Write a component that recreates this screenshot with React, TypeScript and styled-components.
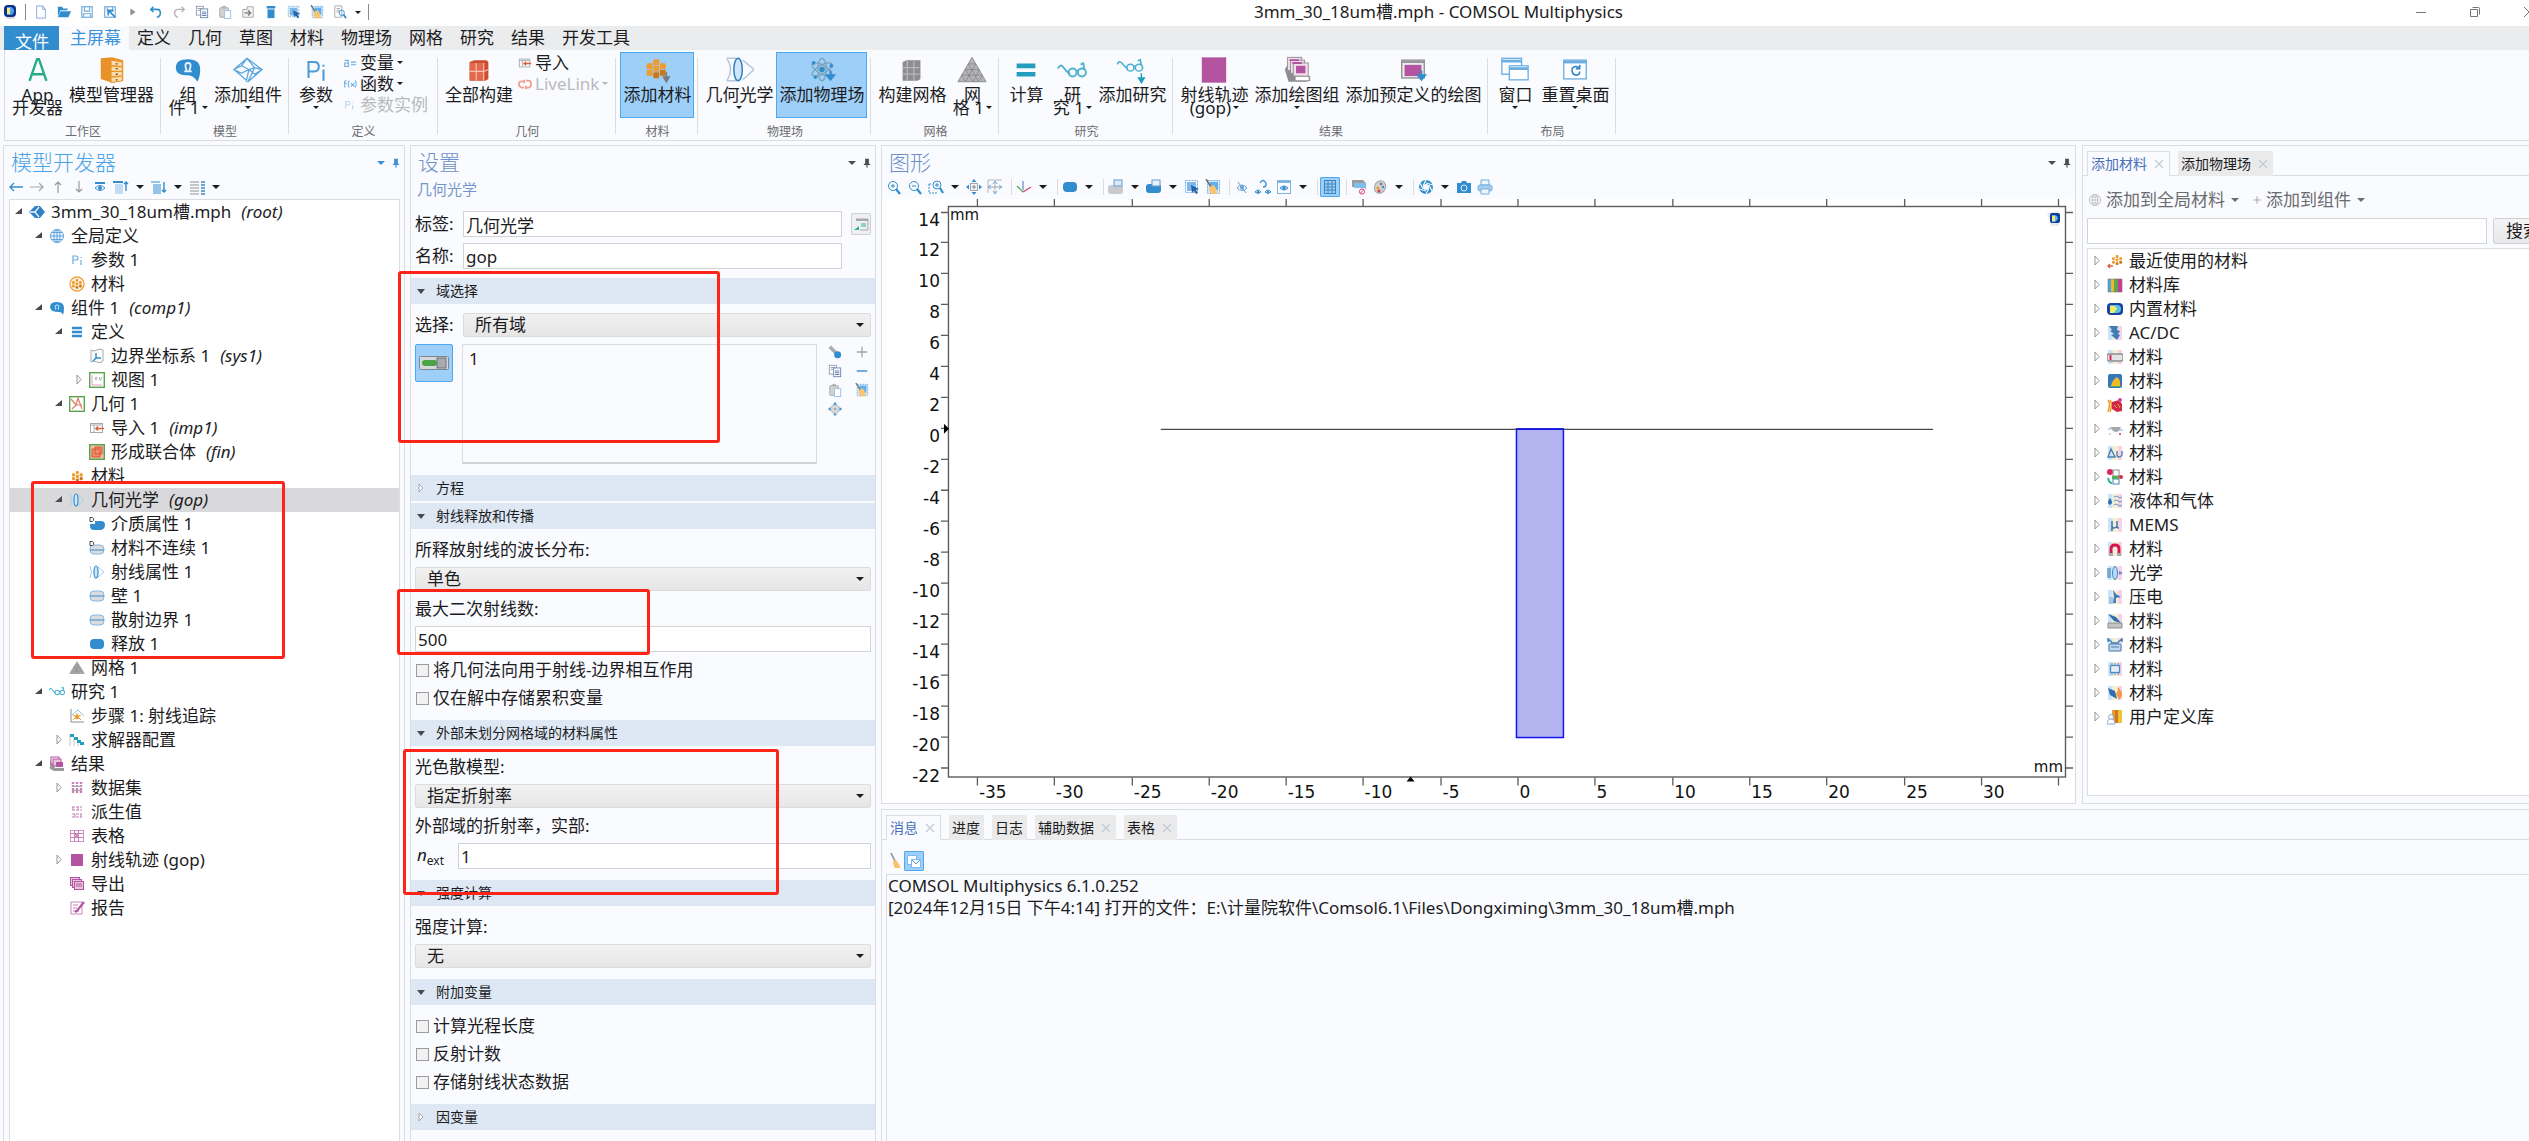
import React from "react";
import styled, { createGlobalStyle, css } from "styled-components";

const c = {
  bg: "#fafbff",
  line: "#dcdde2",
  blue: "#328dcf",
  light: "#bfdcf5",
  grey: "#8a8a8e",
  mauve: "#b4539f",
  teal: "#239fbd",
  orange: "#ef9b2d",
  red: "#dc5f42",
  ink: "#1c1c1e",
  select: "#9dcff8",
  selectLine: "#4aa9f2",
};

const GlobalStyle = createGlobalStyle`
  *, *::before, *::after { box-sizing: border-box; }
  body {
    margin: 0;
    background: ${c.bg};
    color: ${c.ink};
    font: 17px/24px "Noto Sans", "Noto Sans CJK SC", sans-serif;
    overflow: hidden;
  }
  button, input, select { font: inherit; color: inherit; }
`;

/* ---------- icons ---------- */

const cells = (x: number, y: number, s: number, fill: string) => (
  <g fill={fill}>
    <rect x={x + s} y={y} width={s - 0.7} height={s - 0.7} rx="1" />
    <rect x={x} y={y + s * 0.6} width={s - 0.7} height={s - 0.7} rx="1" />
    <rect x={x + 2 * s} y={y + s * 0.6} width={s - 0.7} height={s - 0.7} rx="1" />
    <rect x={x + s} y={y + s} width={s - 0.7} height={s - 0.7} rx="1" />
    <rect x={x} y={y + s * 1.6} width={s - 0.7} height={s - 0.7} rx="1" />
    <rect x={x + 2 * s} y={y + s * 1.6} width={s - 0.7} height={s - 0.7} rx="1" fill="#c9791a" />
    <rect x={x + s} y={y + s * 2} width={s - 0.7} height={s - 0.7} rx="1" fill="#c9791a" />
  </g>
);

const pastel = (
  <g>
    <rect x="1" y="1" width="4" height="14" fill="#cfe3f6" />
    <rect x="5" y="1" width="3" height="14" fill="#e8efdc" />
    <rect x="8" y="1" width="3" height="14" fill="#fdf0d0" />
    <rect x="11" y="1" width="4" height="14" fill="#f6d3ea" />
  </g>
);

const goggles = (
  <g fill="none" stroke="#4eb3cf" strokeWidth="1.4">
    <path d="M0 7q2-4 4-1t5 5" />
    <circle cx="11" cy="10" r="3" />
    <circle cx="18" cy="10" r="3" />
    <path d="M14 9q1-1 1 0M20 8l-1-5-2 1" />
  </g>
);

const smallIcons: Record<string, React.ReactNode> = {
  app: <g><path d="M2 11l3 4h7l2-4z" fill="#d9dadd" /><rect x="2" y="1" width="12" height="12" rx="4" fill="#10308c" /><path d="M5 3h4q3 1 3 4t-3 4H5z" fill="#4fa4e8" /><path d="M5 4h3v6H5z" fill="#f2ec7c" /></g>,
  file: <path d="M3 1h7l3 4v10H3zM10 1v4h3" fill="#fff" stroke="#7aa5d8" />,
  open: <g fill={c.blue}><path d="M1 2h5l1 2h5v2H4l-3 7z" /><path d="M4 7h12l-3 7H1z" /></g>,
  save: <g fill="none" stroke="#79aee0" strokeWidth="1.4"><rect x="2" y="2" width="12" height="12" /><path d="M5 2v5h6V2M4 14v-4h8v4" /></g>,
  saveAs: <g fill="none" stroke="#79aee0" strokeWidth="1.4"><rect x="2" y="2" width="12" height="12" /><path d="M5 2v5h6V2" /><path d="M7 7l7 7M6 12V6h6" stroke={c.blue} strokeWidth="2" /></g>,
  play: <path d="M5 4l6 4-6 4z" fill="#8d8f93" />,
  undo: <path d="M5 2L2 5l3 3M2 5h7q4 0 4 4t-4 5" fill="none" stroke={c.blue} strokeWidth="1.8" />,
  redo: <path d="M11 2l3 3-3 3M14 5H7Q3 5 3 9t4 5" fill="none" stroke="#b2b4b8" strokeWidth="1.6" />,
  copy: <g fill="#fff" stroke="#8c97aa"><rect x="1.5" y="1.5" width="8" height="10" /><path d="M3 4h5M3 6h3" /><rect x="6.5" y="4.5" width="8" height="10" stroke="#6681ae" /><path d="M8 8h5M8 10h5M8 12h5" stroke="#4a70b4" /></g>,
  paste: <g><rect x="2" y="3" width="10" height="11" rx="1" fill="#d2d2d2" stroke="#a5a5a5" /><rect x="5" y="1" width="4" height="3" fill="#b4b4b4" /><rect x="7.5" y="6.5" width="7" height="9" fill="#fff" stroke="#96bde6" /></g>,
  duplicate: <g fill="none" stroke="#a0a2a6"><path d="M7 2h7v12H2V5h5z" fill="#f2f2f2" /><path d="M4 9h7M8 6l3 3-3 3" strokeWidth="1.5" stroke="#77797d" /></g>,
  trash: <g fill={c.blue}><rect x="3" y="1" width="10" height="3" rx="1" /><path d="M4 5h8v10H4z" /></g>,
  pick: <g><rect x="1.5" y="1.5" width="12" height="12" fill="none" stroke="#77b0e4" strokeDasharray="2 1" /><rect x="3" y="3" width="9" height="9" fill="#7db8ea" /><path d="M7 6l8 4-3 1 2 3-2 1-2-3-2 2z" fill="#2565a8" /></g>,
  sweep: <g><rect x="2.5" y="1.5" width="12" height="13" fill="#d5e9fa" stroke="#77b0e4" strokeDasharray="2 1" /><rect x="5" y="3" width="8" height="8" fill="#5fb0ec" /><path d="M1 0l5 8" stroke="#6b6b6b" strokeWidth="1.5" /><path d="M4 8l5-2q4 6 3 9H6q-2-2-2-7z" fill="#fac477" /></g>,
  find: <g fill="none" stroke="#a1a5ad"><path d="M2 1h8v13H2zM4 4h4M4 6h4M4 8h3" /><circle cx="10" cy="9" r="3" stroke={c.blue} /><path d="M12 11l3 4" stroke={c.blue} strokeWidth="2" /></g>,
  left: <path d="M15 8H2M6 4L2 8l4 4" fill="none" stroke={c.blue} strokeWidth="1.3" />,
  right: <path d="M1 8h13M10 4l4 4-4 4" fill="none" stroke="#a4a6aa" strokeWidth="1.2" />,
  up: <path d="M8 14V3M5 6l3-3 3 3" fill="none" stroke="#97999d" strokeWidth="1.2" />,
  down: <path d="M8 2v11M5 10l3 3 3-3" fill="none" stroke="#97999d" strokeWidth="1.2" />,
  showEye: <g fill="none" stroke={c.blue}><path d="M3 4h10" strokeWidth="2" /><path d="M3 9q5-5 10 0-5 5-10 0z" /><circle cx="8" cy="9" r="1.5" fill={c.blue} /></g>,
  listUp: <g stroke={c.blue}><path d="M0 3h10" strokeWidth="2" /><path d="M2 6h8M2 8h8M2 10h8M2 12h8M2 14h8" stroke="#8cbce6" /><path d="M13 12V3M11 5l2-2 2 2" fill="none" strokeWidth="1.4" /></g>,
  listDown: <g stroke={c.blue}><path d="M0 3h9M2 6h8M2 8h8M2 10h8M2 12h8M2 14h8" /><path d="M13 3v10M11 11l2 2 2-2" fill="none" strokeWidth="1.4" /></g>,
  columns: <g strokeWidth="1.6"><path d="M1 3h9M1 6h9M1 9h9M1 12h9M1 15h9" stroke="#b3b5b9" /><path d="M12 3h4M12 6h4M12 9h4M12 12h4M12 15h4" stroke={c.blue} /></g>,
  pin: <path d="M5 1h6v8H5zM3 9h10v2H3zM7 11h2v4H7z" fill="currentColor" />,
  root: <g><path d="M0 8l6-6h5l5 6-5 6H6z" fill="#2f80c4" /><path d="M1 8h5l4-5M6 8l4 5" stroke="#e8f3fc" fill="none" strokeWidth="1.3" /></g>,
  globe: <g fill="#eef6fd" stroke="#62a3dc"><circle cx="8" cy="8" r="6.5" /><path d="M8 1.5v13M1.5 8h13M3 4.5h10M3 11.5h10" fill="none" /><ellipse cx="8" cy="8" rx="3" ry="6.5" fill="none" /></g>,
  globeGrey: <g fill="none" stroke="#c3c4c7"><circle cx="8" cy="8" r="6.5" /><path d="M8 1.5v13M1.5 8h13M3 4.5h10M3 11.5h10" /><ellipse cx="8" cy="8" rx="3" ry="6.5" /></g>,
  pi: <g fill="none" stroke="#6cacde" strokeWidth="1.2"><path d="M4 12V4h3q2 0 2 2T7 8H4M12 8v5M12 5v1" /></g>,
  matCircle: <g><circle cx="8" cy="8" r="7" fill="#fff7ea" stroke="#efa13e" strokeWidth="1.3" />{cells(3, 3, 3.5, c.orange)}</g>,
  mat: cells(3, 3, 3.8, c.orange),
  comp: <g><path d="M1 7q0-5 7-5t7 6q0 4-1 7-1-3-4-3Q1 12 1 7z" fill={c.blue} /><path d="M6 9h1q-2-4 1-4t1 4h1" fill="none" stroke="#d7ebfb" /></g>,
  defs: <path d="M3 4h10M3 8h10M3 12h10" stroke={c.blue} strokeWidth="2.4" />,
  coord: <g fill="none"><path d="M2 2q3 2 6 0t6 0v11q-3 3-6 1t-6 0z" stroke="#a7a9ad" fill="#fbfbfb" /><path d="M7 5v5h5M7 10l-3 3" stroke={c.blue} strokeWidth="1.5" /></g>,
  view: <g fill="none"><rect x=".7" y=".7" width="14.6" height="14.6" stroke="#57a64e" strokeWidth="1.4" /><path d="M3 3v10h10" stroke="#e39cc0" /><path d="M6 5l2 3M8 5l-2 3M10 5l1 3M13 5l-2 4" stroke="#9d9fa3" strokeWidth=".8" /></g>,
  geom: <g fill="none"><rect x=".7" y=".7" width="14.6" height="14.6" stroke="#57a64e" strokeWidth="1.4" /><path d="M2 3l5 6 2-7 4 11M3 13l4-4h6" stroke="#e07c68" strokeWidth="1.2" /></g>,
  imp: <g fill="none" stroke="#a7a9ad"><rect x="1.5" y="3.5" width="12" height="9" /><path d="M2 5h11M5 5v7" /><path d="M15 8.5H7M9 6.5l-2 2 2 2" stroke={c.red} strokeWidth="1.6" /></g>,
  union: <g><rect x=".7" y=".7" width="14.6" height="14.6" fill="#f6bda6" stroke="#57a64e" strokeWidth="1.4" /><path d="M3 5h8v8H3zM6 3h7v7H6z" fill="#f08b6c" stroke="#cf5a36" /></g>,
  lens: <g fill="none"><path d="M1 2q3 6 0 12M9 3l6 5-6 5" stroke="#a9cdec" /><ellipse cx="7" cy="8" rx="2" ry="6" fill="#d2e8fa" stroke={c.blue} strokeWidth="1.2" /></g>,
  blob: <rect x="1" y="3" width="14" height="10" rx="4" fill={c.blue} />,
  blobD: <g><path d="M6 5h6q4 0 4 4t-4 5H5q-4 0-4-4V8h5z" fill={c.blue} /><path d="M1 1.500h2.500l1 1v2l-1 1H1z" fill="none" stroke="#444" /></g>,
  wall: <g><rect x="1" y="3" width="14" height="10" rx="4" fill="#dcdcdf" stroke="#86b8e3" /><path d="M1 8h14" stroke={c.blue} /></g>,
  wallD: <g><rect x="1" y="5" width="14" height="9" rx="4" fill="#dcdcdf" stroke="#86b8e3" /><path d="M1 10h14" stroke={c.blue} /><path d="M1 1.500h2.500l1 1v2l-1 1H1z" fill="#fff" stroke="#444" /></g>,
  mesh: <g><path d="M8 1l8 13H0z" fill="#a9a9ab" /><path d="M6 5h4M4 8h8M2 11h12M5 14l5-9M10 14L5 6" stroke="#89898c" strokeWidth=".6" /></g>,
  study: <g transform="translate(0 1) scale(.74)">{goggles}</g>,
  step: <g fill="none"><path d="M2 1v13h13" stroke="#8b8d91" /><path d="M3 7l6-5 6 6" stroke="#8ecbe0" /><circle cx="8" cy="9" r="2.2" fill={c.orange} /><path d="M4 12l2-2M12 12l-2-2M8 5v2M4 7l2 1M12 7l-2 1" stroke={c.orange} /></g>,
  solver: <g><path d="M1 2v12M5 5v9M9 8v6" stroke="#c5c6c9" /><path d="M1 2h4v3H1zM5 5h4v3H5zM8 8h4v3H8zM11 10h4v3h-4z" fill={c.teal} /></g>,
  results: <g><path d="M1 5v8l4 2h10v-3H6L4 5z" fill="#9a9a9d" /><rect x="2" y="1" width="8" height="7" fill="#fff" stroke={c.mauve} /><rect x="4" y="3" width="8" height="7" fill="#e6c5de" stroke={c.mauve} /><rect x="7" y="6" width="7" height="5" fill={c.mauve} /></g>,
  dataset: <g fill="none"><path d="M4 2v12M8 2v12M12 2v12" stroke="#c77fb8" strokeWidth="2.4" strokeDasharray="2 1" /><path d="M3 6.500h10M3 10.500h10" stroke="#a6a6a8" /></g>,
  derived: <g stroke="#c87bb8" strokeDasharray="3 1" fill="none"><path d="M3 3h10M3 6h10M3 10h10M3 13h10M4 3v3M9 3v3M12 10v3M6 10v3" /></g>,
  table: <g fill="none" stroke={c.mauve}><rect x="1.5" y="2.5" width="13" height="11" stroke="#cf93c2" /><path d="M1.5 5.5h13M1.5 9.5h13M5.5 2.5v11M9.5 2.5v11" stroke="#c77fb8" /><path d="M5 6h5v3H5z" fill="#cf93c2" stroke="none" /></g>,
  plot: <rect x="2" y="2" width="12" height="12" fill={c.mauve} />,
  export: <g fill="#e6c5de" stroke={c.mauve}><rect x="1.5" y="1.5" width="9" height="8" /><rect x="3.5" y="3.5" width="9" height="8" /><rect x="5.5" y="5.5" width="9" height="8" /><path d="M7 8h6M7 10h6" /></g>,
  report: <g fill="none"><path d="M2 2h11v12H2zM4 5h5M4 8h4M4 11h6" stroke="#c787b9" /><path d="M15 2L8 11l-2 1" stroke={c.mauve} strokeWidth="2.2" /></g>,
  zoomIn: <g fill="none" stroke={c.blue}><circle cx="7" cy="7" r="4.5" /><path d="M5 7h4M7 5v4" /><path d="M10 10l4 5" strokeWidth="2.2" /></g>,
  zoomOut: <g fill="none" stroke={c.blue}><circle cx="7" cy="7" r="4.5" /><path d="M5 7h4" /><path d="M10 10l4 5" strokeWidth="2.2" /></g>,
  zoomBox: <g fill="none" stroke={c.blue}><path d="M1 5v9h9M1 5h3" strokeDasharray="2 1" /><circle cx="9" cy="6" r="4" /><path d="M7 6h4M9 4v4" /><path d="M12 9l3 5" strokeWidth="2.2" /></g>,
  extents: <g><rect x="4.5" y="4.5" width="7" height="7" fill="#f2f2f2" stroke="#a2a4a8" /><path d="M8 6v4M6 8h4" stroke="#888" /><path d="M8 0l2.5 3h-5zM8 16l2.5-3h-5zM0 8l3-2.5v5zM16 8l-3-2.5v5z" fill={c.blue} /></g>,
  extSel: <g fill="none"><path d="M1 1h14M8 2v12M1 1v13" stroke="#b4b6ba" /><path d="M2 8h12" stroke="#9d9fa3" /><path d="M4 6L1 8l3 2M12 6l3 2-3 2M6 5l2-3 2 3M6 12l2 3 2-3" stroke="#6fa8da" /></g>,
  axes: <g fill="none" strokeWidth="1.3"><path d="M7 11V2" stroke="#6a94cc" /><path d="M7 13L1 7" stroke="#58b056" /><path d="M7 13l8-5" stroke="#d2417e" /></g>,
  scene: <g><rect x="0" y="6" width="15" height="9" rx="3" fill="#c9cacd" /><rect x="6" y="1" width="8" height="6" fill="#d7e9f9" stroke="#6b9ccb" /></g>,
  sceneBlue: <g><rect x="0" y="5" width="15" height="9" rx="3" fill={c.blue} /><rect x="6" y="1" width="8" height="6" fill="#e6f2fc" stroke="#6b9ccb" /></g>,
  hide: <g fill="none" stroke="#639fd4"><path d="M3 9q5-6 10 0-5 5-10 0z" /><circle cx="8" cy="8.5" r="1.6" fill="#639fd4" /><path d="M4 3l8 11" /></g>,
  swapEye: <g fill="none" stroke={c.blue}><path d="M5 4q3-5 6 0 1 4-3 4" strokeWidth="1.3" /><path d="M0 13q3-4 6 0-3 3-6 0zM10 13q3-4 6 0-3 3-6 0z" /><circle cx="3" cy="13" r="1" fill={c.blue} /><circle cx="13" cy="13" r="1" fill={c.blue} /></g>,
  winEye: <g fill="none" stroke={c.blue}><rect x="1.5" y="1.5" width="13" height="13" stroke="#80b6e4" /><path d="M2 3h12" strokeWidth="2" stroke="#80b6e4" /><path d="M4 9q4-4 8 0-4 4-8 0z" /><circle cx="8" cy="9" r="1.3" fill={c.blue} /></g>,
  grid: <g fill="none" stroke="#4084bd"><rect x="2.5" y="1.5" width="11" height="13" /><path d="M3 5h10M3 8h10M3 11h10M6 2v12M10 2v12" /></g>,
  clip: <g><path d="M1 1h11l3 3v6l-3-2H1z" fill="#9a9ca1" /><path d="M3 4h12v5H3z" fill="#7cc1ee" /><circle cx="11" cy="12.5" r="2.6" fill="#fff" stroke="#dc3c72" /><path d="M9.5 14l3-3" stroke="#dc3c72" /></g>,
  palette: <g><ellipse cx="8" cy="8" rx="5.5" ry="6.5" fill="#d0d1d4" stroke="#a2a4a8" transform="rotate(25 8 8)" /><circle cx="9" cy="5" r="1.3" fill="#777" /><circle cx="6" cy="9" r="1.6" fill={c.orange} /><circle cx="7" cy="12" r="1.6" fill="#dc3c42" /><circle cx="11" cy="8" r="1.2" fill={c.blue} /></g>,
  shutter: <g><circle cx="8" cy="8" r="5" fill="none" stroke={c.blue} strokeWidth="4" /><path d="M8 1l-3 6M15 6l-7-2M14 12l-3-6M8 15l3-6M1 10l7 2M2 4l3 6" stroke="#eef6fd" strokeWidth="1.2" /></g>,
  camera: <g><path d="M1 4h4l1-2h4l1 2h4v10H1z" fill={c.blue} /><circle cx="8" cy="9" r="3" fill="none" stroke="#d7ebfb" /></g>,
  printer: <g fill="#eef6fd" stroke="#74aede"><path d="M4 1h8v5H4z" /><rect x="1" y="6" width="14" height="6" rx="2" fill="#a5cdf0" /><path d="M4 10h8v5H4z" /></g>,
  linkNode: <g><path d="M2 2l8 8" stroke="#a9abb0" strokeWidth="4" /><circle cx="11" cy="11" r="4" fill={c.blue} /></g>,
  plus: <path d="M8 2v12M2 8h12" stroke="#a3a5a9" strokeWidth="1.5" />,
  minus: <path d="M2 8h12" stroke="#4a9ad8" strokeWidth="1.8" />,
  note: <g fill="none"><path d="M3 3h12v11H7" stroke="#a7a9ad" /><path d="M3 4h12" stroke="#a7a9ad" strokeWidth="2" /><path d="M8 8h5M8 10h5" stroke="#2fb39a" /><path d="M1 14l5-4v4z" fill="#2fb39a" /></g>,
  broom: <g><path d="M4 0l4 8" stroke="#8a8a8a" strokeWidth="1.5" /><path d="M6 8l3-1q5 6 4 8H8q-2-3-2-7z" fill="#f9c16d" /></g>,
  mail: <g fill="#fff" stroke="#7fbcee"><rect x="1.5" y="2.5" width="9" height="9" /><rect x="5.5" y="6.5" width="9" height="8" /><path d="M6 7l4 4 4-4" fill="none" stroke="#4a9ad8" /></g>,
  recent: <g>{cells(5, 2, 3.6, c.orange)}<path d="M1 13h5M3 11l-2 2 2 2" stroke={c.red} strokeWidth="1.4" fill="none" /></g>,
  books: <g><rect x="1" y="2" width="3" height="13" fill="#48a7e0" /><rect x="4" y="2" width="3" height="13" fill="#f0b72c" /><rect x="7" y="2" width="4" height="13" fill="#58a94a" /><rect x="11" y="2" width="4" height="13" fill="#d3369b" /><path d="M1 2h14v13H1z" fill="none" stroke="#777" strokeWidth=".6" /></g>,
  builtin: <g><rect x="0" y="2" width="16" height="12" rx="4" fill="#1942a6" /><path d="M3 4h7q4 0 4 4t-4 4H3z" fill="#58c5e4" /><path d="M3 5h5l2 3-3 4H3z" fill="#f2ec6c" /></g>,
  acdc: <g>{pastel}<path d="M2 1h9l-1 4 3 1-2 3 2 1-3 5-6-5 3-1-4-3 2-1z" fill="#3f7db5" /></g>,
  battery: <g>{pastel}<rect x="0" y="5" width="16" height="7" rx="2" fill="#e4e4e6" stroke="#8b8d91" strokeWidth="1.3" /><path d="M3.500 6v5" stroke="#e0245c" strokeWidth="2" /></g>,
  heat: <g><rect x="1" y="1" width="14" height="14" rx="2" fill="#3478ba" /><path d="M4 13q1-6 6-9 4 3 3 9z" fill="#f4b824" /><path d="M3 13h11v1H3z" fill="#56ae52" /></g>,
  bio: <g><path d="M1 3q3 4 0 12M3 3q3 4 0 12" stroke={c.orange} fill="none" strokeWidth="1.5" /><path d="M5 5l7-2 3 4v7l-5 1-5-3z" fill="#cf2848" /><path d="M7 8l3 3M11 7l2 4" stroke="#f6a23c" /><circle cx="13" cy="3" r="2" fill="#d3479b" /></g>,
  bowl: <g><path d="M3 6h11q-2 5-5 5t-6-5z" fill="#a5a7ab" /><path d="M1 8h3M12 9h4M2 13h2" stroke="#79aee0" /><circle cx="13" cy="13" r="1" fill="#e0245c" /></g>,
  delta: <g>{pastel}<path d="M1 12L4 4l4 8zM10 6v4q0 2 2 2t3-2V6" fill="none" stroke="#4c7fae" strokeWidth="1.4" /></g>,
  equil: <g><circle cx="3" cy="3" r="3" fill="#d8265a" /><rect x="6" y="1" width="6" height="6" fill="#fff" stroke="#888" /><rect x="6" y="10" width="6" height="5" fill="#fff" stroke="#4c7fae" /><path d="M5 7h7v3H5z" fill="#56ae52" /><circle cx="14" cy="8" r="2" fill="#d8265a" /><path d="M1 9q1 5 4 5" stroke="#2fb39a" strokeWidth="2" fill="none" /></g>,
  liquid: <g>{pastel}<path d="M3 5q4 5 0 7-4-2 0-7z" fill="#2f6fae" /><path d="M7 4q2-2 4 0t4 0M7 8q2-2 4 0t4 0M7 12q2-2 4 0t4 0" fill="none" stroke="#5d93c4" /></g>,
  mems: <g>{pastel}<path d="M5 14V4v5q0 2 2 2t3-2V4v6q0 1 2 1" fill="none" stroke="#4577a8" strokeWidth="1.6" /></g>,
  magnet: <g>{pastel}<path d="M4 13V8q0-4 4-4t4 4v5" fill="none" stroke="#d8174c" strokeWidth="3" /><path d="M2 12h4v3H2zM10 12h4v3h-4z" fill="#a7a9ad" /></g>,
  optics: <g>{pastel}<path d="M1 3v10M3 3v10" stroke="#4c8cc6" strokeWidth="1.3" /><ellipse cx="8" cy="8" rx="2.5" ry="6.5" fill="#b8d9f3" stroke="#3d86c6" /><path d="M12 6l4 2-4 2z" fill="#7a86c8" /></g>,
  piezo: <g>{pastel}<path d="M6 1l3 4 5 3-5 1v5H6l1-6z" fill="#3f7db5" /><path d="M2 8h4v7H2z" fill="#a3c6e4" /></g>,
  piezoRes: <g>{pastel}<path d="M1 1l8 3 5 6-7-2z" fill="#2f6fae" /><path d="M1 10h14v5H1z" fill="#c3c4c7" stroke="#8b8d91" /></g>,
  rf: <g>{pastel}<path d="M1 2l4 3M15 2l-4 3M4 6h8M1 1v4M15 1v4" stroke="#3f7db5" strokeWidth="1.4" /><rect x="2" y="7" width="12" height="7" rx="1" fill="#bcd7ee" stroke="#4c7fae" /><path d="M4 10h8" stroke="#4c7fae" /></g>,
  chip: <g>{pastel}<rect x="3.5" y="4.5" width="9" height="7" fill="#e8edf2" stroke="#4c8cc6" strokeWidth="1.3" /><path d="M5 2v2M8 2v2M11 2v2M5 12v2M8 12v2M11 12v2" stroke="#4c8cc6" /></g>,
  thermo: <g>{pastel}<path d="M1 3l7 3 2 8-7-4z" fill="#2f6fae" /><path d="M9 9q2-3 2-7 5 5 4 9l-3 4z" fill="#f2994a" /></g>,
  userLib: <g><rect x="5" y="1" width="3" height="13" fill="#ec9b2f" /><rect x="8" y="1" width="3" height="13" fill="#c97a22" /><rect x="11" y="1" width="4" height="13" fill="#f3c233" /><circle cx="4" cy="8" r="2.5" fill="#fff" stroke="#8ea9d2" /><path d="M0 15q0-5 4-5t4 5z" fill="#fff" stroke="#8ea9d2" /></g>,
  varEq: <g fill="none" stroke="#6cacde" strokeWidth="1.3"><path d="M2 5h4v7H2V8h4M9 7h6M9 10h6" /></g>,
  fx: <g fill="none" stroke="#6cacde" strokeWidth="1.2"><path d="M4 4q-2 0-2 2v6M1 7h3M7 4q-2 4 0 8M14 4q2 4 0 8M9 7l4 4M13 7l-4 4" /></g>,
  piGrey: <g fill="none" stroke="#b8d6f0" strokeWidth="1.2"><path d="M3 12V4h3q2 0 2 2T6 8H3M11 8v5M11 5v1" /></g>,
  link: <g fill="none" stroke="#f0a08c" strokeWidth="2"><path d="M6 5H4Q1 5 1 8t3 4h3M10 12h2q3 0 3-4t-3-4H9M7 3v4M9 10v4" /></g>,
};

const add = (color: string) => <path d="M25 15v8M21 20l4 5 4-5z" fill={color} stroke={color} strokeWidth="2" />;

const bigIcons: Record<string, React.ReactNode> = {
  appA: <path d="M7 26L15 3h2l8 23M10 19h12" fill="none" stroke="#27ab8b" strokeWidth="2.6" />,
  cabinet: <g><path d="M4 2l12-1 12 3v22l-12 2L4 24z" fill="#e8932a" /><path d="M15 4l12 2v20l-12 2z" fill="#fbdca8" stroke="#e8932a" /><path d="M15 10l12 1M15 16l12 0M15 22l12-1" stroke="#e8932a" strokeWidth="1.5" /><path d="M20 8h2M20 13h2M20 19h2M20 25h2" stroke="#6b4a1a" strokeWidth="1.5" /></g>,
  comp: <g><path d="M3 12Q3 3 16 3t13 11q0 8-3 13-4-7-10-7Q3 21 3 12z" fill={c.blue} /><path d="M12 16h3q-4-9 1-9t1 9h3" fill="none" stroke="#e6f3fd" strokeWidth="2" /></g>,
  addComp: <path d="M1 14L15 2l16 12-15 13zM9 10l8 4-3 13M9 10l6-8 8 10-6 2M23 12l-7 15M9 10L1 14l8 4 8-4M23 12l8 2-8 5-6-5" fill="none" stroke="#5aa5dc" strokeWidth="1.4" />,
  pi: <path d="M8 23V6h6q5 0 5 5t-5 5H8M24 14v12M24 9v2" fill="none" stroke="#4a9bd8" strokeWidth="2.2" />,
  build: <g><path d="M6 6l5-2h13l2 2v18l-3 2H6z" fill="#cd4d31" /><path d="M6 7h15v18H6z" fill="#e4694c" /><path d="M13 7v19M6 16h15M21 7v19M21 16l5-2" stroke="#f7c2b3" strokeWidth="1.2" /></g>,
  material: <g>{cells(5, 3, 7, c.orange)}<path d="M26 17v7M23 22l3 5 3-5z" fill="#777a80" stroke="#777a80" strokeWidth="1.6" /></g>,
  optics: <g fill="none"><path d="M3 2q8 12 0 24M3 2h10M3 26h10M20 4l12 10-12 11" stroke="#b3c8dc" strokeWidth="1.5" /><ellipse cx="15" cy="14" rx="4.5" ry="12" fill="#cfe6f9" stroke="#2f80bd" strokeWidth="1.6" /></g>,
  physics: <g fill="none" stroke="#7fa0b8" strokeWidth="1.3"><ellipse cx="16" cy="14" rx="4.5" ry="12" /><ellipse cx="16" cy="14" rx="4.5" ry="12" transform="rotate(60 16 14)" /><ellipse cx="16" cy="14" rx="4.5" ry="12" transform="rotate(120 16 14)" /><g fill={c.blue} stroke="none"><circle cx="16" cy="14" r="3" /><circle cx="7" cy="7" r="2" /><circle cx="26" cy="10" r="2" /><circle cx="9" cy="22" r="2" /></g>{add(c.blue)}</g>,
  meshCube: <g><path d="M6 6l4-2h15v20l-3 2H6z" fill="#8d8d90" /><path d="M11 5v21M18 5v21M6 12h18M6 19h18" stroke="#b9b9bb" strokeWidth="1.3" /></g>,
  mesh: <g><path d="M16 1l15 26H1z" fill="#b5b5b7" stroke="#8b8b8e" /><path d="M12 8h8M9 14h14M5 20h22M9 27L20 8M17 27l7-13M9 14l8 13M12 8l11 19M5 20l4 7M27 20l-4 7" stroke="#86868a" strokeWidth=".9" /></g>,
  compute: <path d="M6 10h20M6 19h20" stroke={c.teal} strokeWidth="5" />,
  study: <g transform="translate(1 3) scale(1.42)">{goggles}</g>,
  addStudy: <g><g transform="scale(1.3 1.2)">{goggles}</g><path d="M26 18v7M23 23l3 5 3-5z" stroke={c.teal} fill={c.teal} strokeWidth="1.6" /></g>,
  plot: <rect x="3" y="1" width="26" height="27" fill={c.mauve} />,
  plotGroup: <g><path d="M3 14l4 13 18 0 5-1v-5H13L6 9z" fill="#8d8d90" /><path d="M14 21h15v5H14z" fill="#fff" stroke="#8d8d90" /><g stroke="#8d8d90" fill="#f2dfed"><rect x="6" y="1" width="15" height="14" /><rect x="9" y="4" width="15" height="14" /><rect x="12" y="7" width="16" height="14" /></g><rect x="15" y="10" width="10" height="8" fill={c.mauve} /><path d="M8 4h10M11 7h10" stroke={c.mauve} strokeWidth="2" /></g>,
  predefined: <g><rect x="4" y="4" width="24" height="19" fill="#eee" stroke="#929296" strokeWidth="1.5" /><path d="M4 6h24" stroke="#929296" strokeWidth="2" /><rect x="7" y="9" width="18" height="12" fill={c.mauve} />{add(c.blue)}</g>,
  windows: <g fill="#fff" stroke="#6aaee2" strokeWidth="1.4"><rect x="2" y="2" width="21" height="17" /><path d="M2 5h21" strokeWidth="3" /><rect x="10" y="10" width="20" height="15" /><path d="M10 13h20" strokeWidth="3" /></g>,
  reset: <g fill="#fff" stroke="#6aaee2" strokeWidth="1.4"><rect x="4" y="4" width="24" height="20" /><path d="M4 6h24" strokeWidth="3" /><path d="M20 12q-4-3-7 1-1 6 4 7 4 0 4-4M21 9v4h-4" fill="none" stroke="#2f86cc" strokeWidth="1.7" /></g>,
};

const Svg = styled.svg<{ $w: number; $h: number }>`
  flex: none;
  display: block;
  width: ${(p) => p.$w}px;
  height: ${(p) => p.$h}px;
`;

const Icon = ({ name, size = 16 }: { name: string; size?: number }) => (
  <Svg $w={size} $h={size} viewBox="0 0 16 16" aria-hidden="true">{smallIcons[name]}</Svg>
);

const BigIcon = ({ name }: { name: string }) => (
  <Svg $w={30} $h={28} viewBox="0 0 32 29" aria-hidden="true">{bigIcons[name]}</Svg>
);

/* ---------- window frame ---------- */

const Page = styled.div`
  position: relative;
  min-height: 100vh;
  display: flex;
  flex-direction: column;
  overflow: hidden;
`;

const TitleBar = styled.header`
  display: grid;
  grid-template-columns: 1254px 1fr 118px;
  align-items: center;
  height: 26px;
  padding-bottom: 2px;
  background: #fff;
  overflow: hidden;
`;

const QuickTools = styled.div`
  display: flex;
  align-items: center;
  gap: 7px;
  padding-left: 2px;
`;

const Rule = styled.span`
  flex: none;
  width: 1px;
  height: 16px;
  background: ${c.grey};
`;

const Title = styled.h1`
  margin: 0;
  font-size: 17px;
  line-height: 24px;
  font-weight: 400;
`;

const WindowControls = styled.div`
  display: flex;
  gap: 34px;
`;

const bare = css`
  appearance: none;
  margin: 0;
  padding: 0;
  border: 0;
  background: none;
`;

const IconButton = styled.button<{ $w?: number; $on?: boolean }>`
  ${bare}
  flex: none;
  display: grid;
  place-items: center;
  width: ${(p) => p.$w ?? 20}px;
  height: 20px;
  ${(p) => p.$on && css`
    background: ${c.select};
    box-shadow: inset 0 0 0 1px ${c.selectLine};
    border-radius: 2px;
  `}
`;

const TabStrip = styled.nav`
  display: flex;
  height: 24px;
  padding-left: 4px;
  background: #ebecee;
`;

const RibbonTab = styled.button<{ $kind?: "file" | "home" }>`
  ${bare}
  padding: 0 9px 0 8px;
  line-height: 24px;
  white-space: nowrap;
  ${(p) => p.$kind === "file" && css`
    padding: 4px 10px 0 11px;
    background: ${c.blue};
    color: #fff;
    overflow: hidden;
  `}
  ${(p) => p.$kind === "home" && css`
    padding: 0 8px 0 11px;
    background: ${c.bg};
    color: #3d93db;
  `}
`;

const Ribbon = styled.section`
  display: flex;
  height: 91px;
  margin-left: 4px;
  border: solid ${c.line};
  border-width: 0 0 1px 1px;
`;

const Group = styled.div`
  display: grid;
  grid-template-rows: 1fr 16px;
  justify-items: center;
  padding: 2px 4px 0;
  background: linear-gradient(${c.line}, ${c.line}) right 0 top 8px / 1px 76px no-repeat;
`;

const GroupItems = styled.div`
  display: flex;
  align-items: flex-start;
`;

const GroupName = styled.span`
  font-size: 12px;
  line-height: 16px;
  color: #6c6d70;
`;

const RibbonButton = styled.button<{ $on?: boolean }>`
  ${bare}
  display: flex;
  flex-direction: column;
  align-items: center;
  min-width: 46px;
  height: 66px;
  padding: 4px 3px 0;
  line-height: 13px;
  white-space: nowrap;
  ${(p) => p.$on && css`
    background: ${c.select};
    box-shadow: inset 0 0 0 1px ${c.selectLine};
  `}
`;

const Label = styled.span`
  display: flex;
  flex-direction: column;
  align-items: center;
  margin-top: 4px;
`;

const Line = styled.span`
  display: flex;
  align-items: center;
  gap: 2px;
  height: 13px;
`;

const Tip = styled.span<{ $size?: number; $dim?: boolean }>`
  flex: none;
  width: 0;
  border: solid transparent;
  border-width: ${(p) => p.$size ?? 3}px ${(p) => p.$size ?? 3}px 0;
  border-top-color: ${(p) => (p.$dim ? "#b5b5b8" : "currentColor")};
`;

const SmallColumn = styled.div<{ $start: number; $end: number }>`
  display: flex;
  flex-direction: column;
  padding: 0 ${(p) => p.$end}px 0 ${(p) => p.$start}px;
`;

const SmallButton = styled.button<{ $dim?: boolean }>`
  ${bare}
  display: flex;
  align-items: center;
  gap: 3px;
  height: 21px;
  line-height: 21px;
  white-space: nowrap;
  color: ${(p) => (p.$dim ? "#b9babd" : "inherit")};
`;

type Cmd = { icon: string; lines: string[]; menu?: boolean; inline?: boolean; on?: boolean };
type Small = { icon: string; text: string; menu?: boolean; dim?: boolean };
const ribbon: { name: string; cmds: Cmd[]; small?: Small[]; start?: number; end?: number }[] = [
  { name: "工作区", cmds: [{ icon: "appA", lines: ["App", "开发器"] }, { icon: "cabinet", lines: ["模型管理器"] }] },
  { name: "模型", cmds: [{ icon: "comp", lines: ["组", "件 1"], inline: true }, { icon: "addComp", lines: ["添加组件"], menu: true }] },
  { name: "定义", start: 4, end: 6, cmds: [{ icon: "pi", lines: ["参数"], menu: true }], small: [{ icon: "varEq", text: "变量", menu: true }, { icon: "fx", text: "函数", menu: true }, { icon: "piGrey", text: "参数实例", dim: true }] },
  { name: "几何", start: 2, end: 4, cmds: [{ icon: "build", lines: ["全部构建"] }], small: [{ icon: "imp", text: "导入" }, { icon: "link", text: "LiveLink", menu: true, dim: true }] },
  { name: "材料", cmds: [{ icon: "material", lines: ["添加材料"], on: true }] },
  { name: "物理场", cmds: [{ icon: "optics", lines: ["几何光学"], menu: true }, { icon: "physics", lines: ["添加物理场"], on: true }] },
  { name: "网格", cmds: [{ icon: "meshCube", lines: ["构建网格"] }, { icon: "mesh", lines: ["网", "格 1"], inline: true }] },
  { name: "研究", cmds: [{ icon: "compute", lines: ["计算"] }, { icon: "study", lines: ["研", "究 1"], inline: true }, { icon: "addStudy", lines: ["添加研究"] }] },
  { name: "结果", cmds: [{ icon: "plot", lines: ["射线轨迹", "(gop)"], inline: true }, { icon: "plotGroup", lines: ["添加绘图组"], menu: true }, { icon: "predefined", lines: ["添加预定义的绘图"] }] },
  { name: "布局", cmds: [{ icon: "windows", lines: ["窗口"], menu: true }, { icon: "reset", lines: ["重置桌面"], menu: true }] },
];

const quick = ["file", "open", "save", "saveAs", "play", "undo", "redo", "copy", "paste", "duplicate", "trash", "pick", "sweep", "find"];
const tabs = ["定义", "几何", "草图", "材料", "物理场", "网格", "研究", "结果", "开发工具"];

/* ---------- docked panels ---------- */

const Workspace = styled.main`
  flex: 1;
  display: grid;
  grid-template-columns: 402px 466px minmax(0, 1fr);
  gap: 5px;
  padding: 4px 0 0 3px;
`;

const Panel = styled.section`
  display: flex;
  flex-direction: column;
  min-width: 0;
  border: 1px solid ${c.line};
  border-bottom: 0;
`;

const PanelHead = styled.div<{ $tint: string }>`
  display: flex;
  align-items: center;
  gap: 6px;
  height: 31px;
  padding: 2px 3px 0 7px;
  color: ${(p) => p.$tint};
`;

const PanelTitle = styled.h2<{ $tint?: string }>`
  flex: 1;
  margin: 0;
  font-size: 21px;
  font-weight: 300;
  line-height: 29px;
  color: ${(p) => p.$tint ?? "#6d8fc9"};
`;

const Toolbar = styled.div`
  display: flex;
  align-items: center;
  gap: 1px;
  height: 20px;
  margin-bottom: 2px;
  padding-left: 2px;
`;

const Divider = styled.span`
  flex: none;
  width: 1px;
  height: 16px;
  margin: 0 1px 0 5px;
  background: ${c.line};
`;

const Tree = styled.ul`
  flex: 1;
  margin: 0 4px 0 5px;
  padding: 0;
  list-style: none;
  background: #fff;
  border: 1px solid ${c.line};
  border-bottom: 0;
`;

const TreeRow = styled.li<{ $level: number; $on?: boolean }>`
  display: flex;
  align-items: center;
  height: 24px;
  padding-left: ${(p) => 5 + p.$level * 20}px;
  white-space: pre;
  background: ${(p) => (p.$on ? "#d9d9db" : "none")};
`;

const TreeIcon = styled.span`
  display: flex;
  margin: 0 6px 0 4px;
`;

const Tag = styled.em`
  margin-left: 10px;
`;

const Twisty = ({ state }: { state?: "open" | "closed" }) => (
  <Svg $w={10} $h={10} viewBox="0 0 10 10" aria-hidden="true">
    {state === "open" && <path d="M7 1v6H0z" fill="#4a4a4c" />}
    {state === "closed" && <path d="M2 0v9l4-4.5z" fill="#fff" stroke="#97979a" />}
  </Svg>
);

type Node = [number, string, string, ("open" | "closed")?, string?];
const nodes: Node[] = [
  [0, "root", "3mm_30_18um槽.mph", "open", "(root)"],
  [1, "globe", "全局定义", "open"],
  [2, "pi", "参数 1"],
  [2, "matCircle", "材料"],
  [1, "comp", "组件 1", "open", "(comp1)"],
  [2, "defs", "定义", "open"],
  [3, "coord", "边界坐标系 1", undefined, "(sys1)"],
  [3, "view", "视图 1", "closed"],
  [2, "geom", "几何 1", "open"],
  [3, "imp", "导入 1", undefined, "(imp1)"],
  [3, "union", "形成联合体", undefined, "(fin)"],
  [2, "mat", "材料"],
  [2, "lens", "几何光学", "open", "(gop)"],
  [3, "blobD", "介质属性 1"],
  [3, "wallD", "材料不连续 1"],
  [3, "lens", "射线属性 1"],
  [3, "wall", "壁 1"],
  [3, "wall", "散射边界 1"],
  [3, "blob", "释放 1"],
  [2, "mesh", "网格 1"],
  [1, "study", "研究 1", "open"],
  [2, "step", "步骤 1: 射线追踪"],
  [2, "solver", "求解器配置", "closed"],
  [1, "results", "结果", "open"],
  [2, "dataset", "数据集", "closed"],
  [2, "derived", "派生值"],
  [2, "table", "表格"],
  [2, "plot", "射线轨迹 (gop)", "closed"],
  [2, "export", "导出"],
  [2, "report", "报告"],
];

const HeadTools = () => (
  <>
    <Tip $size={4} />
    <Icon name="pin" size={10} />
  </>
);

/* ---------- settings ---------- */

const SubTitle = styled.div`
  height: 34px;
  padding-left: 6px;
  font-size: 15px;
  line-height: 24px;
  color: #7495cb;
`;

const FormRow = styled.div`
  display: flex;
  align-items: center;
  padding: 0 4px;
  margin-bottom: 6px;
`;

const FieldName = styled.label`
  flex: none;
  width: 48px;
`;

const Symbol = styled.label`
  flex: none;
  width: 43px;
  padding-left: 2px;
  font-style: italic;
  line-height: 20px;
`;

const Sub = styled.sub`
  font-size: 12px;
  line-height: 12px;
  font-style: normal;
`;

const TextBox = styled.input`
  flex: 1;
  min-width: 0;
  height: 26px;
  padding: 0 2px;
  border: 1px solid #d2d3d7;
  background: #fff;
  outline: 0;
`;

const NoteButton = styled.button`
  flex: none;
  display: grid;
  place-items: center;
  width: 20px;
  height: 22px;
  margin-left: 9px;
  padding: 0;
  border: 1px solid #cfd0d4;
  border-radius: 2px;
  background: #f0f0f1;
`;

const NoteSpace = styled.span`
  flex: none;
  width: 29px;
`;

const SectionHead = styled.button`
  ${bare}
  display: flex;
  align-items: center;
  gap: 10px;
  width: 100%;
  height: 26px;
  padding-left: 5px;
  background: #dee8f4;
  font-size: 14px;
  text-align: left;
`;

const SectionBody = styled.div<{ $end?: number }>`
  padding: 3px 4px ${(p) => p.$end ?? 11}px;
`;

const BlockLabel = styled.label`
  display: block;
  margin: 6px 0 5px;
  line-height: 24px;
`;

const SelectWrap = styled.div`
  flex: 1;
  display: grid;
  align-items: center;
  & > * { grid-area: 1 / 1; }
  & > span { justify-self: end; margin-right: 7px; pointer-events: none; }
`;

const SelectBox = styled.select`
  appearance: none;
  width: 100%;
  height: 24px;
  padding: 0 11px;
  border: 1px solid #dcdcde;
  border-radius: 2px;
  background: linear-gradient(#f1f1f2, #e6e6e7);
  line-height: 20px;
`;

const Select = ({ id, value }: { id: string; value: string }) => (
  <SelectWrap>
    <SelectBox id={id}><option>{value}</option></SelectBox>
    <Tip $size={4} />
  </SelectWrap>
);

const CheckRow = styled.label`
  display: flex;
  align-items: center;
  gap: 4px;
  height: 28px;
`;

const CheckBox = styled.input`
  appearance: none;
  width: 13px;
  height: 13px;
  margin: 0 0 0 1px;
  border: 1px solid #9b9b9e;
  background: #f2f2f2;
`;

const Check = ({ text }: { text: string }) => <CheckRow><CheckBox type="checkbox" />{text}</CheckRow>;

const CheckList = styled.div`
  padding-top: 4px;
`;

const SelectRow = styled.div`
  display: flex;
  align-items: center;
  padding-top: 6px;
`;

const WideRow = styled.div`
  display: flex;
  align-items: center;
`;

const Domain = styled.div`
  display: flex;
  align-items: flex-start;
  margin-top: 7px;
`;

const ActiveToggle = styled.button`
  flex: none;
  display: grid;
  place-items: center;
  width: 38px;
  height: 38px;
  margin-right: 9px;
  padding: 0;
  border: 1px solid ${c.selectLine};
  border-radius: 2px;
  background: ${c.select};
`;

const DomainList = styled.ul`
  flex: 1;
  height: 120px;
  margin: 0;
  padding: 2px 6px;
  list-style: none;
  border: 1px solid ${c.line};
  border-bottom: 2px solid #d2d3d7;
`;

const DomainTools = styled.div`
  display: grid;
  grid-template-columns: 27px 27px;
  grid-auto-rows: 19px;
  place-items: center;
  width: 54px;
  margin-left: 4px;
  margin-right: -4px;
`;

const DomainButton = styled(IconButton)`
  height: 16px;
  align-self: start;
`;

const Section = ({ title, open = true, end, children }: { title: string; open?: boolean; end?: number; children?: React.ReactNode }) => (
  <>
    <SectionHead>
      <Svg $w={10} $h={10} viewBox="0 0 10 10" aria-hidden="true">
        {open ? <path d="M1 3h8L5 8z" fill="#4a4a4c" /> : <path d="M3 1v8l4-4z" fill="#fff" stroke="#a5a5a8" />}
      </Svg>
      {title}
    </SectionHead>
    {children && <SectionBody $end={end}>{children}</SectionBody>}
  </>
);

const Gap = styled.div<{ $h: number }>`
  height: ${(p) => p.$h}px;
`;

const Settings = () => (
  <Panel>
    <PanelHead $tint="#4d4e52"><PanelTitle>设置</PanelTitle><HeadTools /></PanelHead>
    <SubTitle>几何光学</SubTitle>
    <FormRow>
      <FieldName htmlFor="label">标签:</FieldName>
      <TextBox id="label" defaultValue="几何光学" />
      <NoteButton aria-label="备注"><Icon name="note" /></NoteButton>
    </FormRow>
    <FormRow>
      <FieldName htmlFor="name">名称:</FieldName>
      <TextBox id="name" defaultValue="gop" />
      <NoteSpace />
    </FormRow>
    <Gap $h={3} />
    <Section title="域选择">
      <SelectRow><FieldName htmlFor="domain">选择:</FieldName><Select id="domain" value="所有域" /></SelectRow>
      <Domain>
        <ActiveToggle aria-label="激活选择">
          <Svg $w={30} $h={14} viewBox="0 0 30 14"><rect x=".5" y=".5" width="29" height="13" rx="1" fill="#d4d8dc" stroke="#7d8792" /><rect x="3" y="4" width="15" height="6" rx="3" fill="#4aa443" /><rect x="18" y="2" width="9" height="10" fill="#a9abaf" stroke="#6b727a" /></Svg>
        </ActiveToggle>
        <DomainList><li>1</li></DomainList>
        <DomainTools>
          {["linkNode", "plus", "copy", "minus", "paste", "sweep", "extents"].map((n) => <DomainButton key={n} $w={18} aria-label={n}><Icon name={n} size={14} /></DomainButton>)}
        </DomainTools>
      </Domain>
    </Section>
    <Section title="方程" open={false} />
    <Gap $h={2} />
    <Section title="射线释放和传播" end={8}>
      <BlockLabel htmlFor="wave">所释放射线的波长分布:</BlockLabel>
      <Select id="wave" value="单色" />
      <BlockLabel htmlFor="rays">最大二次射线数:</BlockLabel>
      <WideRow><TextBox id="rays" defaultValue="500" /></WideRow>
      <CheckList><Check text="将几何法向用于射线-边界相互作用" /><Check text="仅在解中存储累积变量" /></CheckList>
    </Section>
    <Section title="外部未划分网格域的材料属性">
      <BlockLabel htmlFor="disp">光色散模型:</BlockLabel>
      <Select id="disp" value="指定折射率" />
      <BlockLabel htmlFor="next">外部域的折射率，实部:</BlockLabel>
      <WideRow><Symbol htmlFor="next">n<Sub>ext</Sub></Symbol><TextBox id="next" defaultValue="1" /></WideRow>
    </Section>
    <Section title="强度计算">
      <BlockLabel htmlFor="power">强度计算:</BlockLabel>
      <Select id="power" value="无" />
    </Section>
    <Section title="附加变量" end={8}>
      <CheckList><Check text="计算光程长度" /><Check text="反射计数" /><Check text="存储射线状态数据" /></CheckList>
    </Section>
    <Section title="因变量" open={false} />
  </Panel>
);

/* ---------- graphics ---------- */

const RightSide = styled.div`
  display: flex;
  flex-direction: column;
  min-width: 0;
  gap: 5px;
`;

const UpperRow = styled.div`
  display: grid;
  grid-template-columns: minmax(0, 1fr) 447px;
  gap: 6px;
  & > section { border-bottom: 1px solid ${c.line}; }
`;

const Canvas = styled.svg`
  display: block;
  width: 100%;
  background: #fff;
`;

const graphicsTools = [
  "zoomIn", "zoomOut", "zoomBox", "v", "extents", "extSel", "|", "axes", "v", "|", "blob", "v", "|", "scene", "v", "sceneBlue", "v",
  "pick", "sweep", "|", "hide", "swapEye", "winEye", "v", "|", "*grid", "|", "clip", "palette", "v", "|", "shutter", "v", "camera", "printer",
];

const ToolSet = ({ items }: { items: string[] }) => (
  <>
    {items.map((t, i) => {
      if (t === "|") return <Divider key={i} />;
      if (t === "v") return <IconButton key={i} $w={16} aria-label="更多"><Tip $size={4} /></IconButton>;
      const on = t[0] === "*";
      const name = on ? t.slice(1) : t;
      return <IconButton key={i} $on={on} aria-label={name}><Icon name={name} /></IconButton>;
    })}
  </>
);

const X0 = 637;
const Y0 = 230;
const tickX = (i: number) => Math.round(X0 + i * 77.3);
const tickY = (v: number) => Math.round(Y0 - v * 15.46);

const Plot = () => {
  const xs = Array.from({ length: 15 }, (_, i) => i - 7);
  const ys = Array.from({ length: 19 }, (_, i) => 14 - i * 2);
  return (
    <Canvas viewBox="0 0 1194 605" fontFamily='"DejaVu Sans", sans-serif' fontSize="17" fill="#111">
      <rect x="635" y="230" width="47" height="309" fill="#b3b3f0" stroke="#1414f0" strokeWidth="1.5" />
      <path d="M279 230.5H1052" stroke="#4a4a4a" strokeWidth="1.3" />
      <path d="M635 230.5h47" stroke="#1414f0" strokeWidth="1.3" />
      <rect x="66.5" y="7.5" width="1118" height="571" fill="none" stroke="#5c5c5c" strokeWidth="1.4" />
      <g stroke="#5c5c5c" strokeWidth="1.3">
        {xs.map((i) => <path key={i} d={`M${tickX(i) - 0.5} 0v7M${tickX(i) - 0.5} 579v8`} />)}
        {ys.map((v) => <path key={v} d={`M59 ${tickY(v) - 0.5}h7M1185 ${tickY(v) - 0.5}h7`} />)}
      </g>
      {xs.slice(0, 14).map((i) => <text key={i} x={tickX(i) + 1} y="600">{i * 5}</text>)}
      {ys.map((v) => <text key={v} x="58" y={tickY(v) + 13} textAnchor="end">{v}</text>)}
      <path d="M62 225l5 5-5 5zM525 583l4-5 4 5z" fill="#000" />
      <g fontSize="15"><text x="68" y="21">mm</text><text x="1182" y="573" textAnchor="end">mm</text></g>
      <g transform="translate(1166 12)"><path d="M0 2l12-2v15H4z" fill="#e9eaec" /><rect x="3" y="2" width="10" height="10" rx="2" fill="#12399c" /><path d="M5 4h3q3 1 3 3t-3 4H5z" fill="#57b6ea" /><path d="M5 5h3v5H5z" fill="#f2ec6c" /></g>
    </Canvas>
  );
};

/* ---------- tabbed docks ---------- */

const DockTabs = styled.div`
  display: flex;
  gap: 8px;
  height: 30px;
  padding: 5px 0 0 4px;
  box-shadow: inset 0 -1px ${c.line};
`;

const DockTab = styled.button<{ $on?: boolean }>`
  ${bare}
  display: flex;
  align-items: center;
  gap: 6px;
  padding: 0 4px 0 3px;
  font-size: 14px;
  line-height: 22px;
  background: ${(p) => (p.$on ? c.bg : "#eaeaeb")};
  color: ${(p) => (p.$on ? "#4a71b8" : c.ink)};
  ${(p) => p.$on && css`
    border: 1px solid ${c.line};
    border-bottom: 0;
  `}
`;

const Cross = () => (
  <Svg $w={12} $h={12} viewBox="0 0 12 12" aria-hidden="true"><path d="M2 2l8 8M10 2l-8 8" stroke="#c5cbd5" strokeWidth="1.3" /></Svg>
);

const AddTools = styled.div`
  display: flex;
  align-items: center;
  height: 42px;
  padding: 6px 0 0 5px;
  color: #6b6c70;
`;

const AddButton = styled.button`
  ${bare}
  display: flex;
  align-items: center;
  gap: 4px;
  margin-right: 13px;
  & > span { margin-left: 2px; }
`;

const SearchRow = styled.div`
  display: flex;
  gap: 6px;
  width: 470px;
  padding-left: 4px;
`;

const SearchButton = styled.button`
  flex: none;
  width: 60px;
  height: 26px;
  padding: 0;
  border: 1px solid #cfd0d4;
  border-radius: 2px;
  background: linear-gradient(#f4f4f5, #e7e7e8);
  line-height: 22px;
`;

const MaterialPanel = styled(Panel)`
  border-right: 0;
  overflow: hidden;
`;

const MaterialList = styled.ul`
  flex: 1;
  margin: 4px 0 7px 4px;
  padding: 0;
  list-style: none;
  background: #fff;
  border: solid ${c.line};
  border-width: 1px 0 1px 1px;
`;

const materials: [string, string][] = [
  ["recent", "最近使用的材料"], ["books", "材料库"], ["builtin", "内置材料"], ["acdc", "AC/DC"], ["battery", "材料"],
  ["heat", "材料"], ["bio", "材料"], ["bowl", "材料"], ["delta", "材料"], ["equil", "材料"], ["liquid", "液体和气体"],
  ["mems", "MEMS"], ["magnet", "材料"], ["optics", "光学"], ["piezo", "压电"], ["piezoRes", "材料"], ["rf", "材料"],
  ["chip", "材料"], ["thermo", "材料"], ["userLib", "用户定义库"],
];

const MessagePanel = styled(Panel)`
  flex: 1;
  border-right: 0;
`;

const MessageTools = styled.div`
  display: flex;
  align-items: center;
  height: 34px;
  padding: 8px 0 0 4px;
`;

const Log = styled.div`
  flex: 1;
  margin-left: 4px;
  padding: 0 1px;
  border: solid ${c.line};
  border-width: 1px 0 0 1px;
  line-height: 22px;
  white-space: pre;
`;

/* Red markup frames drawn over the finished window. */
const Markup = styled.div<{ $x: number; $y: number; $w: number; $h: number }>`
  position: absolute;
  left: ${(p) => p.$x}px;
  top: ${(p) => p.$y}px;
  width: ${(p) => p.$w}px;
  height: ${(p) => p.$h}px;
  border: 3px solid #ff2418;
  border-radius: 3px;
  pointer-events: none;
`;

const messageTabs: [string, boolean][] = [["消息", true], ["进度", false], ["日志", false], ["辅助数据", true], ["表格", true]];
const treeTools = ["left", "right", "up", "down", "showEye", "listUp", "v", "listDown", "v", "columns", "v"];

export default function App() {
  return (
    <Page>
      <GlobalStyle />
      <TitleBar>
        <QuickTools>
          <Icon name="app" />
          <Rule />
          {quick.map((n) => <IconButton key={n} $w={16} aria-label={n}><Icon name={n} size={14} /></IconButton>)}
          <Tip />
          <Rule />
        </QuickTools>
        <Title>3mm_30_18um槽.mph - COMSOL Multiphysics</Title>
        <WindowControls>
          <IconButton aria-label="最小化"><Svg $w={10} $h={10} viewBox="0 0 10 10"><path d="M0 5.5h10" stroke="#777" /></Svg></IconButton>
          <IconButton aria-label="还原"><Svg $w={12} $h={12} viewBox="0 0 12 12"><path d="M1.5 3.5h7v7h-7zM3.5 1.5h6q1 0 1 1v6" fill="none" stroke="#777" /></Svg></IconButton>
          <IconButton aria-label="关闭"><Svg $w={10} $h={10} viewBox="0 0 10 10"><path d="M0 0l10 10M10 0L0 10" stroke="#777" /></Svg></IconButton>
        </WindowControls>
      </TitleBar>

      <TabStrip>
        <RibbonTab $kind="file">文件</RibbonTab>
        <RibbonTab $kind="home">主屏幕</RibbonTab>
        {tabs.map((t) => <RibbonTab key={t}>{t}</RibbonTab>)}
      </TabStrip>

      <Ribbon>
        {ribbon.map((g) => (
          <Group key={g.name}>
            <GroupItems>
              {g.cmds.map((b) => (
                <RibbonButton key={b.icon} $on={b.on}>
                  <BigIcon name={b.icon} />
                  <Label>
                    {b.lines.map((l, i) => (
                      <Line key={l}>{l}{b.inline && i === b.lines.length - 1 && <Tip />}</Line>
                    ))}
                    {b.menu && <Line><Tip /></Line>}
                  </Label>
                </RibbonButton>
              ))}
              {g.small && (
                <SmallColumn $start={g.start ?? 4} $end={g.end ?? 4}>
                  {g.small.map((s) => (
                    <SmallButton key={s.text} $dim={s.dim}><Icon name={s.icon} size={14} />{s.text}{s.menu && <Tip $dim={s.dim} />}</SmallButton>
                  ))}
                </SmallColumn>
              )}
            </GroupItems>
            <GroupName>{g.name}</GroupName>
          </Group>
        ))}
      </Ribbon>

      <Workspace>
        <Panel>
          <PanelHead $tint="#3b90d6"><PanelTitle $tint="#4ba3e6">模型开发器</PanelTitle><HeadTools /></PanelHead>
          <Toolbar><ToolSet items={treeTools} /></Toolbar>
          <Tree>
            {nodes.map(([level, icon, text, state, tag], i) => (
              <TreeRow key={i} $level={level} $on={tag === "(gop)"}>
                <Twisty state={state} />
                <TreeIcon><Icon name={icon} /></TreeIcon>
                {text}
                {tag && <Tag>{tag}</Tag>}
              </TreeRow>
            ))}
          </Tree>
        </Panel>

        <Settings />

        <RightSide>
          <UpperRow>
            <Panel>
              <PanelHead $tint="#4d4e52"><PanelTitle>图形</PanelTitle><HeadTools /></PanelHead>
              <Toolbar><ToolSet items={graphicsTools} /></Toolbar>
              <Plot />
            </Panel>
            <MaterialPanel>
              <DockTabs>
                <DockTab $on>添加材料<Cross /></DockTab>
                <DockTab>添加物理场<Cross /></DockTab>
              </DockTabs>
              <AddTools>
                <AddButton><Icon name="globeGrey" size={14} />添加到全局材料<Tip $size={4} /></AddButton>
                <AddButton><Icon name="plus" size={10} />添加到组件<Tip $size={4} /></AddButton>
              </AddTools>
              <SearchRow>
                <TextBox aria-label="搜索材料" />
                <SearchButton>搜索</SearchButton>
              </SearchRow>
              <MaterialList>
                {materials.map(([icon, text], i) => (
                  <TreeRow key={i} $level={0}>
                    <Twisty state="closed" />
                    <TreeIcon><Icon name={icon} /></TreeIcon>
                    {text}
                  </TreeRow>
                ))}
              </MaterialList>
            </MaterialPanel>
          </UpperRow>

          <MessagePanel>
            <DockTabs>
              {messageTabs.map(([t, closable], i) => <DockTab key={t} $on={i === 0}>{t}{closable && <Cross />}</DockTab>)}
            </DockTabs>
            <MessageTools>
              <IconButton $w={18} aria-label="清除"><Icon name="broom" /></IconButton>
              <IconButton $on aria-label="消息"><Icon name="mail" /></IconButton>
            </MessageTools>
            <Log>{"COMSOL Multiphysics 6.1.0.252\n[2024年12月15日 下午4:14] 打开的文件：E:\\计量院软件\\Comsol6.1\\Files\\Dongximing\\3mm_30_18um槽.mph"}</Log>
          </MessagePanel>
        </RightSide>
      </Workspace>

      <Markup $x={398} $y={271} $w={322} $h={172} />
      <Markup $x={31} $y={481} $w={254} $h={178} />
      <Markup $x={397} $y={589} $w={253} $h={66} />
      <Markup $x={403} $y={749} $w={376} $h={146} />
    </Page>
  );
}
